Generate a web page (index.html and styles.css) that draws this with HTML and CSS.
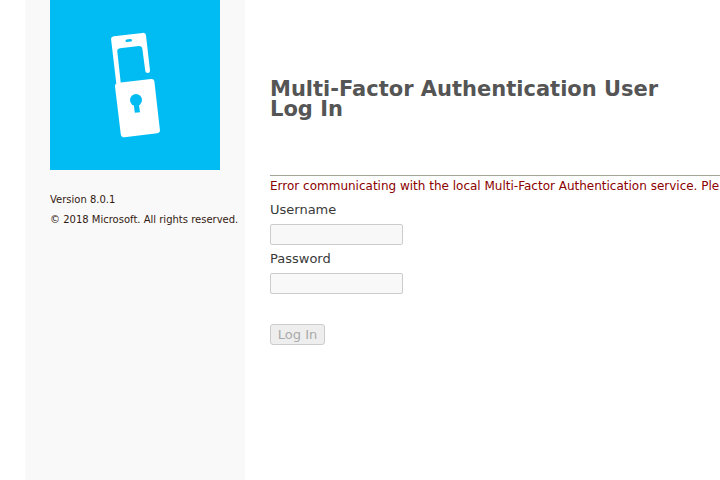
FILE: index.html
```html
<!DOCTYPE html>
<html lang="en">
<head>
<meta charset="utf-8">
<title>Multi-Factor Authentication User Log In</title>
<link rel="stylesheet" href="styles.css">
</head>
<body>
<div class="page">
  <aside class="sidebar">
    <div class="logo">
      <svg width="170" height="170" viewBox="50 0 170 170">
        <path fill="#fff" d="M114 36.300L142.500 32.900Q145.600 32.600 146 35.500L150 70.500Q150.200 72.700 148 73Q145.700 73.200 145.300 71L142.300 48.500Q142 45.700 139 46L120 48.300Q117 48.800 117.300 51.500L120.700 82.600L151 79.100Q154 78.800 154.400 81.500L159.900 130Q160.200 132.700 157.200 133.200L124.500 137.300Q121.300 137.500 120.800 134.500L115 86.500Q114.700 84.300 116.300 83.500L111.100 39.500Q110.800 36.800 114 36.300Z"/>
        <path stroke="#00bcf2" stroke-width="2.400" stroke-linecap="round" d="M126.700 40.800L130.700 40.300"/>
        <circle cx="136" cy="100" r="6" fill="#00bcf2"/>
        <path fill="#00bcf2" d="M133.700 104L134.800 112.800L140 112.200L138.800 103.500Z"/>
      </svg>
    </div>
    <p class="version">Version 8.0.1</p>
    <p class="copyright">© 2018 Microsoft. All rights reserved.</p>
  </aside>
  <main class="content">
    <h1 class="title">Multi-Factor Authentication User Log In</h1>
    <p class="error">Error communicating with the local Multi-Factor Authentication service. Ple</p>
    <form class="login">
      <label class="label" for="user">Username</label>
      <input class="field" id="user" type="text" disabled>
      <label class="label" for="pass">Password</label>
      <input class="field" id="pass" type="password" disabled>
      <button class="submit" type="button" disabled>Log In</button>
    </form>
  </main>
</div>
</body>
</html>
```
FILE: styles.css
```css
* { box-sizing: border-box; }
body {
  margin: 0;
  background: #fff;
  font-family: "DejaVu Sans", sans-serif;
  overflow: hidden;
}
p, h1 { margin: 0; }
.page { display: flex; height: 480px; padding-left: 25px; }
.sidebar {
  flex: 0 0 220px;
  padding-left: 25px;
  background: #f9f9f9;
  color: #331a11;
  font-size: 10px;
  line-height: 20px;
  white-space: nowrap;
}
.logo { width: 170px; height: 170px; margin-bottom: 20px; background: #00bcf2; }
.logo svg { display: block; }
.content { flex: 1; min-width: 0; padding-left: 25px; }
.title {
  height: 96px;
  margin-top: 79px;
  width: 400px;
  color: #555;
  font-size: 21px;
  line-height: 20px;
}
.error {
  border-top: 1px solid #a5a597;
  color: #8b0000;
  font-size: 12px;
  line-height: 20px;
  white-space: nowrap;
}
.login { display: flex; flex-direction: column; align-items: flex-start; }
.label { height: 28px; padding-top: 4px; color: #3a3a3a; font-size: 13px; line-height: 20px; }
.field {
  width: 133px;
  height: 21px;
  padding: 0;
  border: 1px solid #ccc;
  border-radius: 2px;
  background: #f8f8f8;
}
.submit {
  width: 55px;
  height: 21px;
  margin-top: 30px;
  padding: 0;
  border: 1px solid #ccc;
  border-radius: 3px;
  background: #eee;
  color: #aaa;
  font: 13px/19px "DejaVu Sans", sans-serif;
}
```
